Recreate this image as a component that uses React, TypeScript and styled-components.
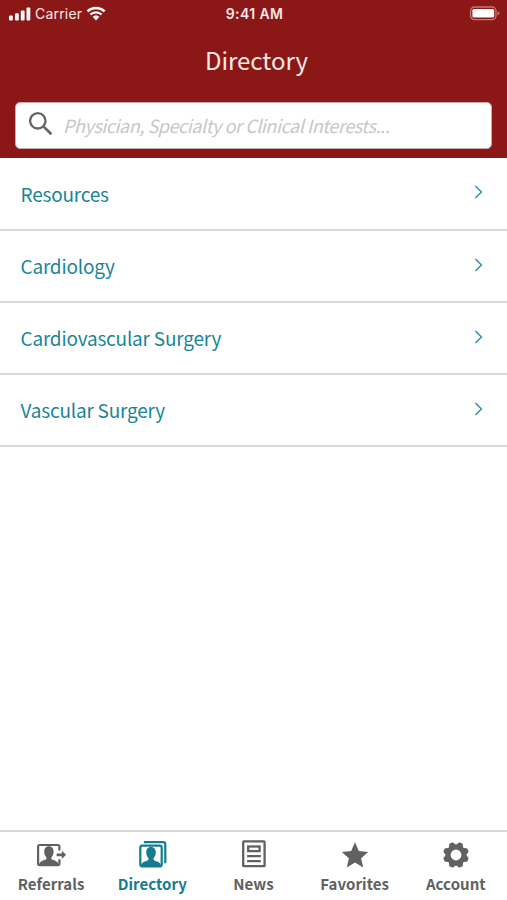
import React from 'react';
import styled, { createGlobalStyle } from 'styled-components';

const GlobalStyle = createGlobalStyle`
  * { box-sizing: border-box; }
  body { margin: 0; background: #fff; }
`;

const Screen = styled.div`
  display: flex;
  flex-direction: column;
  width: 507px;
  height: 900px;
  overflow: hidden;
  background: #fff;
  font-family: 'Noto Sans CJK SC', 'Noto Sans', sans-serif;
`;

const Header = styled.header`
  display: flex;
  flex-direction: column;
  height: 158px;
  background: #8b1717;
  color: #fbe9e6;
`;

const StatusBar = styled.div`
  display: grid;
  grid-template-columns: 1fr auto 1fr;
  align-items: center;
  height: 27px;
  padding: 0 7px 0 9px;
  font-family: Inter, sans-serif;
  font-size: 14px;
  line-height: 27px;
`;

const Carrier = styled.div`
  display: flex;
  align-items: center;
  gap: 4px;
  letter-spacing: 0.2px;
`;

const Clock = styled.div`
  font-weight: 600;
  font-size: 14px;
  letter-spacing: 0.4px;
`;

const BatterySlot = styled.div`
  display: flex;
  justify-content: flex-end;
`;

const Title = styled.h1`
  margin: 0;
  height: 65px;
  padding-left: 6px;
  font-size: 24px;
  font-weight: 400;
  line-height: 66px;
  text-align: center;
`;

const SearchBox = styled.label`
  display: flex;
  align-items: center;
  height: 47px;
  margin: 10px 15px 0 15px;
  padding-left: 13px;
  border: 1px solid #cfa6a3;
  border-radius: 5px;
  background: #fff;
`;

const SearchInput = styled.input`
  flex: 1;
  min-width: 0;
  margin: 0 0 2px 10px;
  padding: 0;
  border: 0;
  outline: 0;
  background: transparent;
  font: italic 400 18px/42px 'Noto Sans CJK SC', sans-serif;
  letter-spacing: -0.44px;
  &::placeholder { color: #c5c8c8; opacity: 1; }
`;

const List = styled.ul`
  flex: 1;
  margin: 0;
  padding: 0;
  list-style: none;
`;

const Row = styled.li`
  display: flex;
  align-items: center;
  justify-content: space-between;
  height: 72px;
  padding: 0 23px 0 20.5px;
  border-bottom: 2px solid #dadada;
  color: #1b8597;
  font-size: 19px;
  letter-spacing: -0.21px;
  line-height: 28px;
  &:first-child { height: 73px; }
`;

const Chevron = styled.svg`
  margin-bottom: 3px;
`;

const TabBar = styled.nav`
  display: grid;
  grid-template-columns: repeat(5, 101.2px);
  height: 70px;
  padding-left: 1px;
  border-top: 2px solid #d8d8d8;
`;

const Tab = styled.a<{ $active?: boolean }>`
  display: flex;
  flex-direction: column;
  align-items: center;
  padding-top: 7px;
  color: ${(p) => (p.$active ? '#147c90' : '#616161')};
  font-size: 15px;
  font-weight: 700;
  text-decoration: none;
`;

const TabIcon = styled.svg`
  flex: none;
  width: 32px;
  height: 32px;
`;

const TabLabel = styled.span`
  margin-top: 1px;
  padding-right: 1px;
  letter-spacing: 0.05px;
  line-height: 24px;
  white-space: nowrap;
`;

const rows = ['Resources', 'Cardiology', 'Cardiovascular Surgery', 'Vascular Surgery'];

const person = 'M0-8.7c3 0 4.5 2.2 4.5 5.2 0 2.4-.9 4.2-2.1 5.2v1.5c0 1.4 6.4 1.6 6.9 5.2V10H-9.3V8.4c.5-3.6 6.9-3.8 6.9-5.2V1.7C-3.6.7-4.5-1.1-4.5-3.5c0-3 1.5-5.2 4.5-5.2z';

const gearTeeth = Array.from({ length: 8 }, (_, i) => i * 45 + 22.5);

const tabs = [
  {
    label: 'Referrals',
    icon: (
      <>
        <path d="M23.4 11.5V7.6a1.6 1.6 0 0 0-1.6-1.6H3.7A1.6 1.6 0 0 0 2.1 7.6v17a1.6 1.6 0 0 0 1.6 1.6h18.1a1.6 1.6 0 0 0 1.6-1.6v-4.4" fill="none" stroke="currentColor" strokeWidth="2.2" />
        <path d={person} transform="translate(12.9 16.4) scale(1.04)" fill="currentColor" />
        <path d="M20.6 14.4h5.2v-2.7l4.3 4.1-4.3 4.1v-2.7h-5.2z" fill="currentColor" />
      </>
    ),
  },
  {
    label: 'Directory',
    active: true,
    icon: (
      <>
        <rect x="3.3" y="6.7" width="21.4" height="20.8" rx="2" fill="none" stroke="currentColor" strokeWidth="2.2" />
        <path d={person} transform="translate(14 17.2) scale(1.06)" fill="currentColor" />
        <path d="M6.9 3.1h19.2a2.2 2.2 0 0 1 2.2 2.2v18.9" fill="none" stroke="currentColor" strokeWidth="2.2" />
      </>
    ),
  },
  {
    label: 'News',
    icon: (
      <g fill="none" stroke="currentColor" strokeWidth="2.3">
        <rect x="5.2" y="2.4" width="21.4" height="24.8" rx=".8" />
        <rect x="10.2" y="7.5" width="11.4" height="4.6" />
        <path d="M9.1 17.1h13.7M9.1 22.2h13.7" />
      </g>
    ),
  },
  {
    label: 'Favorites',
    icon: <path d="m16 3.2 3.8 8.8 9.4.9-7.1 6.3 2.1 9.3-8.2-4.9-8.2 4.9 2.1-9.3-7.1-6.3 9.4-.9z" fill="currentColor" />,
  },
  {
    label: 'Account',
    icon: (
      <>
        <circle cx="16" cy="16" r="7.9" fill="none" stroke="currentColor" strokeWidth="5" />
        {gearTeeth.map((angle) => (
          <path key={angle} d="M11.6 7.6 13.6 4q.3-1 1.2-1h2.4q.9 0 1.2 1l2 3.6z" transform={`rotate(${angle} 16 16)`} fill="currentColor" />
        ))}
      </>
    ),
  },
];

export default function App() {
  return (
    <Screen>
      <GlobalStyle />
      <Header>
        <StatusBar>
          <Carrier>
            <svg width="22" height="14" viewBox="0 0 22 14" fill="#fff">
              <rect x="0" y="8.6" width="3.8" height="5" rx="1" />
              <rect x="6" y="6.3" width="3.8" height="7.3" rx="1" />
              <rect x="11.8" y="3.5" width="3.8" height="10.1" rx="1" />
              <rect x="17.5" y=".4" width="3.8" height="13.2" rx="1" />
            </svg>
            <span>Carrier</span>
            <svg width="20" height="15" viewBox="0 0 20 15">
              <path d="M1.4 5.4a12.6 12.6 0 0 1 17.2 0M4.4 8.5a8.2 8.2 0 0 1 11.2 0" fill="none" stroke="#fff" strokeWidth="2.3" />
              <path d="M6.6 10.8a5 5 0 0 1 6.8 0L10 14.4z" fill="#fff" />
            </svg>
          </Carrier>
          <Clock>9:41 AM</Clock>
          <BatterySlot>
            <svg width="31" height="15" viewBox="0 0 31 15">
              <rect x="1.6" y="1" width="25.4" height="12.6" rx="3.8" fill="none" stroke="#c77775" strokeWidth="1.3" />
              <rect x="3.4" y="3" width="21.8" height="8.6" rx="1.5" fill="#fff" />
              <path d="M28.5 5.2q2 .8 2 2.1t-2 2.1z" fill="#c77775" />
            </svg>
          </BatterySlot>
        </StatusBar>
        <Title>Directory</Title>
        <SearchBox>
          <svg width="24" height="32" viewBox="0 0 24 32" fill="none" stroke="#666" strokeWidth="2.3">
            <circle cx="8.8" cy="10.8" r="7.7" />
            <path d="m14.4 16.4 8 7.8" strokeWidth="2.7" />
          </svg>
          <SearchInput placeholder="Physician, Specialty or Clinical Interests..." />
        </SearchBox>
      </Header>
      <List>
        {rows.map((name) => (
          <Row key={name}>
            <span>{name}</span>
            <Chevron width="10" height="14" viewBox="0 0 10 14" fill="none" stroke="#3b96aa" strokeWidth="1.6">
              <path d="m1.4 1 6 6-6 6" />
            </Chevron>
          </Row>
        ))}
      </List>
      <TabBar>
        {tabs.map((tab) => (
          <Tab key={tab.label} $active={tab.active}>
            <TabIcon viewBox="0 0 32 32">{tab.icon}</TabIcon>
            <TabLabel>{tab.label}</TabLabel>
          </Tab>
        ))}
      </TabBar>
    </Screen>
  );
}
